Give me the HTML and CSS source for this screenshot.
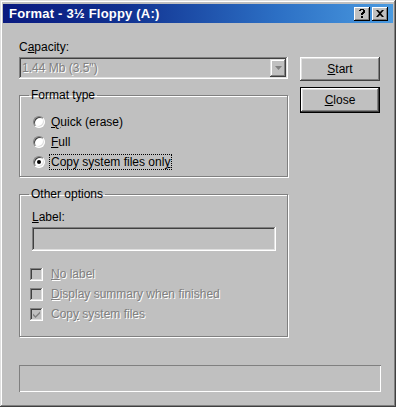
FILE: index.html
```html
<!DOCTYPE html>
<html>
<head>
<meta charset="utf-8">
<link rel="stylesheet" href="styles.css">
</head>
<body>
<div class="window">
  <div class="titlebar">
    <span class="title">Format - 3½ Floppy (A:)</span>
    <div class="tbtns">
      <div class="tbtn">
        <svg width="8" height="9" viewBox="0 0 8 9"><path d="M1 1h1V0h4v1h1v3H6v1H5v1H3V4h1V3h1V1H3v1H1z M3 7h2v2H3z" fill="#000"/></svg>
      </div>
      <div class="tbtn">
        <svg width="8" height="7" viewBox="0 0 8 7"><path d="M0 0h2l2 2 2-2h2L5 3.5 8 7H6L4 5 2 7H0l3-3.5z" fill="#000"/></svg>
      </div>
    </div>
  </div>
  <div class="body">
    <div class="main">
      <div class="left">
        <div class="lbl">C<u>a</u>pacity:</div>
        <div class="combo">
          <span class="dis">1.44 Mb (3.5")</span>
          <div class="dropbtn">
            <svg width="7" height="4" viewBox="0 0 7 4"><path d="M0 0h7L3.5 4z" fill="#808080"/></svg>
          </div>
        </div>
        <fieldset class="group g1">
          <legend>Format type</legend>
          <div class="opt"><span class="radio"></span><span><u>Q</u>uick (erase)</span></div>
          <div class="opt"><span class="radio"></span><span><u>F</u>ull</span></div>
          <div class="opt"><span class="radio on"></span><span class="focus">Copy system files onl<u>y</u></span></div>
        </fieldset>
        <fieldset class="group g2">
          <legend>Other options</legend>
          <div class="lbl2"><u>L</u>abel:</div>
          <div class="input"></div>
          <div class="chk"><span class="box"></span><span class="dis"><u>N</u>o label</span></div>
          <div class="chk"><span class="box"></span><span class="dis"><u>D</u>isplay summary when finished</span></div>
          <div class="chk"><span class="box"><svg width="9" height="9" viewBox="0 0 9 9"><path d="M1 3.5 3.5 6 8 1.5V3.5L3.5 8 1 5.5z" fill="#808080"/></svg></span><span class="dis">Cop<u>y</u> system files</span></div>
        </fieldset>
      </div>
      <div class="right">
        <div class="btn"><span><u>S</u>tart</span></div>
        <div class="btn default"><span><u>C</u>lose</span></div>
      </div>
    </div>
    <div class="status"></div>
  </div>
</div>
</body>
</html>
```

FILE: styles.css
```css
html, body {
  margin: 0;
  padding: 0;
  background: #ffffff;
}
body {
  font-family: "Liberation Sans", Arial, sans-serif;
  font-size: 12px;
  color: #000;
}
.window {
  width: 396px;
  height: 407px;
  box-sizing: border-box;
  background: #c0c0c0;
  padding: 3px;
  box-shadow: inset -1px -1px 0 #404040, inset 1px 1px 0 #dfdfdf, inset -2px -2px 0 #808080, inset 2px 2px 0 #ffffff;
}
.titlebar {
  height: 19px;
  margin-top: 1px;
  background: linear-gradient(to right, #0a1a80 0%, #10308f 30%, #2c6fc4 70%, #4a9ae0 100%);
  display: flex;
  align-items: center;
  justify-content: space-between;
  padding: 0 5px 0 6px;
}
.title {
  color: #fff;
  font-weight: bold;
  font-size: 13px;
  letter-spacing: 0.2px;
}
.tbtns {
  display: flex;
  gap: 2px;
}
.tbtn {
  width: 16px;
  height: 14px;
  box-sizing: border-box;
  background: #c0c0c0;
  display: flex;
  align-items: center;
  justify-content: center;
  box-shadow: inset -1px -1px 0 #000, inset 1px 1px 0 #fff, inset -2px -2px 0 #808080;
}
.body {
  padding: 17px 0 0 16px;
}
.main {
  display: flex;
  gap: 12px;
}
.left {
  width: 269px;
}
.lbl {
  height: 14px;
  line-height: 14px;
  margin-bottom: 3px;
}
.combo {
  height: 22px;
  box-sizing: border-box;
  display: flex;
  align-items: center;
  justify-content: space-between;
  padding: 2px 2px 2px 3px;
  box-shadow: inset -1px -1px 0 #fff, inset 1px 1px 0 #808080, inset -2px -2px 0 #dfdfdf, inset 2px 2px 0 #404040;
}
.dis {
  color: #808080;
  text-shadow: 1px 1px 0 #fff;
}
.dropbtn {
  width: 16px;
  height: 18px;
  box-sizing: border-box;
  display: flex;
  align-items: center;
  justify-content: center;
  box-shadow: inset -1px -1px 0 #404040, inset 1px 1px 0 #dfdfdf, inset -2px -2px 0 #808080, inset 2px 2px 0 #fff;
}
.group {
  margin: 0;
  padding: 0 0 0 12px;
  border: 1px solid #808080;
  box-shadow: inset 1px 1px 0 #fff, 1px 1px 0 #fff;
  width: 269px;
  box-sizing: border-box;
}
.group legend {
  padding: 0 2px;
  margin-left: -3px;
  line-height: 14px;
}
.g1 {
  margin-top: 9px;
  height: 89px;
  padding-top: 10px;
}
.opt {
  display: flex;
  align-items: center;
  height: 20px;
  gap: 6px;
}
.radio {
  width: 12px;
  height: 12px;
  box-sizing: border-box;
  border-radius: 50%;
  background: #fff;
  border: 1px solid;
  border-color: #808080 #fff #fff #808080;
  box-shadow: inset 1px 1px 0 #404040, inset -1px -1px 0 #dfdfdf;
  position: relative;
  margin-left: 1px;
}
.radio.on::after {
  content: "";
  position: absolute;
  left: 3px;
  top: 3px;
  width: 4px;
  height: 4px;
  border-radius: 50%;
  background: #000;
}
.focus {
  outline: 1px dotted #000;
  outline-offset: 0px;
  padding: 0 1px;
  margin-left: -1px;
}
.g2 {
  margin-top: 10px;
  height: 150px;
  padding-top: 9px;
}
.lbl2 {
  line-height: 14px;
  height: 14px;
  margin-bottom: 3px;
}
.input {
  width: 244px;
  height: 24px;
  box-sizing: border-box;
  box-shadow: inset -1px -1px 0 #fff, inset 1px 1px 0 #808080, inset -2px -2px 0 #dfdfdf, inset 2px 2px 0 #404040;
  margin-bottom: 13px;
}
.chk {
  display: flex;
  align-items: center;
  height: 20px;
  gap: 8px;
}
.box {
  width: 13px;
  height: 13px;
  box-sizing: border-box;
  display: flex;
  align-items: center;
  justify-content: center;
  background: #c0c0c0;
  box-shadow: inset -1px -1px 0 #fff, inset 1px 1px 0 #808080, inset -2px -2px 0 #dfdfdf, inset 2px 2px 0 #404040;
  margin-left: -2px;
}
.right {
  display: flex;
  flex-direction: column;
  gap: 6px;
  padding-top: 17px;
}
.btn {
  width: 80px;
  height: 24px;
  box-sizing: border-box;
  display: flex;
  align-items: center;
  justify-content: center;
  box-shadow: inset -1px -1px 0 #404040, inset 1px 1px 0 #fff, inset -2px -2px 0 #808080, inset 2px 2px 0 #dfdfdf;
}
.btn.default {
  height: 26px;
  border: 1px solid #000;
}
.status {
  margin-top: 28px;
  width: 362px;
  height: 27px;
  box-sizing: border-box;
  box-shadow: inset 1px 1px 0 #808080, inset -1px -1px 0 #fff;
}
```
